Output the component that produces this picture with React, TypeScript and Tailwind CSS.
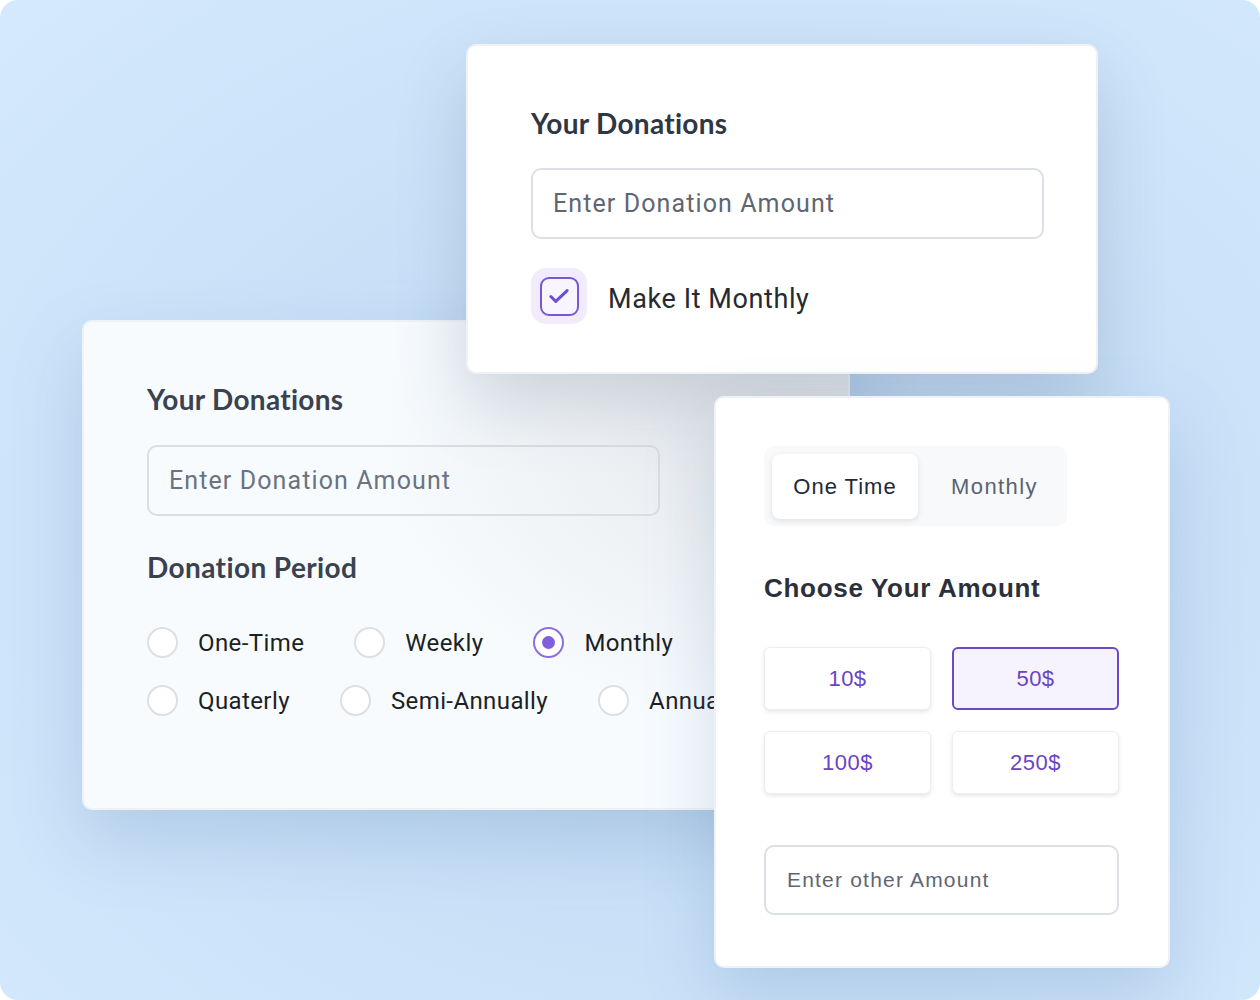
import React, { useState } from "react"

const body = "font-['Roboto','Liberation_Sans',sans-serif]"
const heading = "font-['Lato','Liberation_Sans',sans-serif]"
const arial = "font-['Liberation_Sans','Arial',sans-serif]"

const Radio = ({ label, checked }: { label: string; checked?: boolean }) => (
  <div className="flex items-center gap-5">
    <span
      className={
        checked
          ? "w-[31px] h-[31px] rounded-full border-2 border-[#8b6fe0] bg-white flex items-center justify-center"
          : "w-[31px] h-[31px] rounded-full border-2 border-[#dcdfe3] bg-white"
      }
    >
      {checked && <span className="w-[13px] h-[13px] rounded-full bg-[#7f5fdc]" />}
    </span>
    <span className={`${body} text-[24px] tracking-[0.4px] text-[#1c1f24] leading-none`}>{label}</span>
  </div>
)

const CheckIcon = () => (
  <svg width="26" height="26" viewBox="0 0 24 24" fill="none">
    <path
      d="M4.5 12.5l4.5 4.5L19.5 7"
      stroke="#6f4fcf"
      strokeWidth="2.8"
      strokeLinecap="round"
      strokeLinejoin="round"
    />
  </svg>
)

export default function App() {
  const [tab, setTab] = useState("one")
  const [amount, setAmount] = useState("50$")
  const amounts = ["10$", "50$", "100$", "250$"]

  const tabClass = (active: boolean) =>
    active
      ? `${arial} h-[65px] rounded-[8px] bg-white shadow-[0_2px_6px_rgba(0,0,0,0.1)] text-[22px] tracking-[1px] text-[#1f2937]`
      : `${arial} h-[65px] rounded-[8px] text-[22px] tracking-[1.4px] text-[#5b6270]`

  return (
    <div className="w-[1260px] h-[1000px] bg-white">
      <div className="relative w-[1260px] h-[1000px] rounded-[18px] overflow-hidden bg-[radial-gradient(ellipse_at_55%_55%,#bcd5ee_0%,#c8e0f7_45%,#d4e9fd_100%)]">
        {/* left card */}
        <div className="absolute left-[82px] top-[320px] w-[768px] h-[490px] rounded-[10px] border-2 border-[#eef2f6] bg-[radial-gradient(ellipse_420px_300px_at_92%_22%,#e3e6e9_0%,#eef1f4_45%,#f7fbfe_100%)] shadow-[0_30px_70px_rgba(80,120,170,0.22)] pl-[63px] pt-[60px]">
          <h2 className={`${heading} text-[28px] tracking-[0.3px] font-bold text-[#3a4250] leading-[34px]`}>
            Your Donations
          </h2>
          <div className="mt-[29px] w-[513px] h-[71px] rounded-[10px] border-2 border-[#dadde2] flex items-center px-[20px]">
            <span className={`${body} text-[25px] tracking-[1.1px] text-[#6b7280]`}>Enter Donation Amount</span>
          </div>
          <h2 className={`${heading} mt-[34px] text-[28px] tracking-[0.4px] font-bold text-[#3a4250] leading-[34px]`}>
            Donation Period
          </h2>
          <div className="mt-[43px] flex flex-col gap-[27px]">
            <div className="flex items-center gap-[50px]">
              <Radio label="One-Time" />
              <Radio label="Weekly" />
              <Radio label="Monthly" checked />
            </div>
            <div className="flex items-center gap-[50px]">
              <Radio label="Quaterly" />
              <Radio label="Semi-Annually" />
              <Radio label="Annually" />
            </div>
          </div>
        </div>

        {/* top card */}
        <div className="absolute left-[466px] top-[44px] w-[632px] h-[330px] rounded-[10px] border-2 border-[#eef1f5] bg-white shadow-[0_30px_70px_rgba(60,80,110,0.2)] pl-[63px] pt-[60px]">
          <h2 className={`${heading} text-[28px] tracking-[0.3px] font-bold text-[#2f3644] leading-[34px]`}>
            Your Donations
          </h2>
          <div className="mt-[28px] w-[513px] h-[71px] rounded-[10px] border-2 border-[#dcdfe3] flex items-center px-[20px]">
            <span className={`${body} text-[25px] tracking-[1.1px] text-[#5f6673]`}>Enter Donation Amount</span>
          </div>
          <div className="mt-[29px] flex items-center gap-[21px]">
            <div className="w-[56px] h-[56px] rounded-[15px] bg-[#f1ebfd] flex items-center justify-center">
              <div className="w-[39px] h-[39px] rounded-[9px] border-2 border-[#7658d6] bg-[#f8f5ff] flex items-center justify-center">
                <CheckIcon />
              </div>
            </div>
            <span className={`${body} mt-[6px] text-[27px] tracking-[0.6px] text-[#262a31]`}>Make It Monthly</span>
          </div>
        </div>

        {/* right card */}
        <div className="absolute left-[714px] top-[396px] w-[456px] h-[572px] rounded-[10px] border-2 border-[#eef1f5] bg-white shadow-[0_30px_70px_rgba(80,120,170,0.22)] pl-[48px] pt-[48px]">
          <div className="w-[303px] h-[80px] rounded-[10px] bg-[#f7f9fb] p-[8px] flex">
            <button onClick={() => setTab("one")} className={`${tabClass(tab === "one")} w-[146px] shrink-0`}>
              One Time
            </button>
            <button
              onClick={() => setTab("monthly")}
              className={`${tabClass(tab === "monthly")} w-[141px] shrink-0 pl-[12px]`}
            >
              Monthly
            </button>
          </div>
          <h2 className={`${arial} mt-[46px] text-[26px] tracking-[0.7px] font-bold text-[#2b303a] leading-[32px]`}>
            Choose Your Amount
          </h2>
          <div className="mt-[43px] grid grid-cols-[167px_167px] gap-x-[21px] gap-y-[21px]">
            {amounts.map((a) => (
              <button
                key={a}
                onClick={() => setAmount(a)}
                className={
                  amount === a
                    ? `${arial} h-[63px] rounded-[6px] border-2 border-[#6a48c6] bg-[#f7f3fe] text-[22px] tracking-[0.5px] text-[#6a44c3]`
                    : `${arial} h-[63px] rounded-[6px] border border-[#eceef1] bg-white shadow-[0_2px_4px_rgba(0,0,0,0.1)] text-[22px] tracking-[0.5px] text-[#6a44c3]`
                }
              >
                {a}
              </button>
            ))}
          </div>
          <div className="mt-[51px] w-[355px] h-[70px] rounded-[10px] border-2 border-[#dcdfe3] flex items-center px-[21px]">
            <span className={`${arial} text-[21px] tracking-[1.2px] text-[#5f6673]`}>Enter other Amount</span>
          </div>
        </div>
      </div>
    </div>
  )
}
